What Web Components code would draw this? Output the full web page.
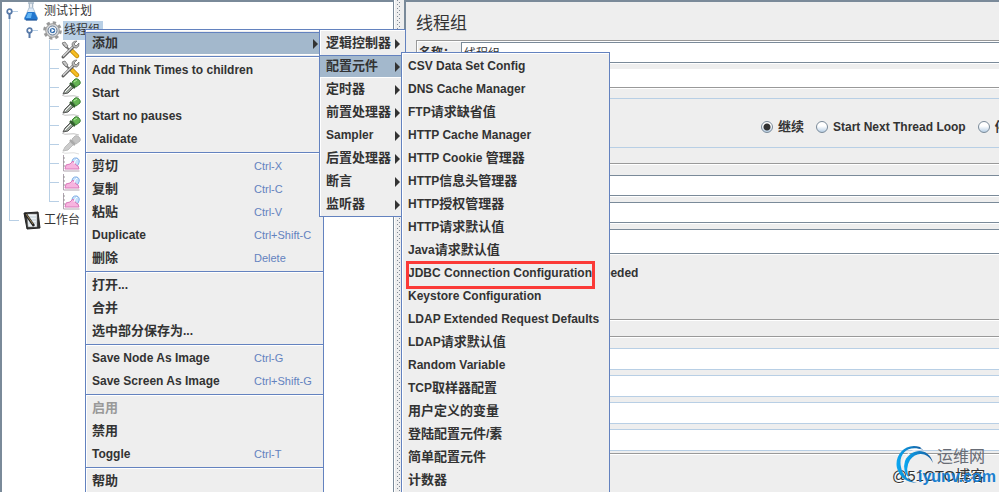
<!DOCTYPE html>
<html lang="zh-CN">
<head>
<meta charset="utf-8">
<title>测试计划</title>
<style>
    html, body {
        height: 100%;
        margin: 0;
        overflow: hidden;
    }
    body {
        --line: #7a8a99;
        --blue: #6382bf;
        --pale: #b8cfe5;
        --select: #a3b8cc;
        --panel: #eeeeee;
        background-color: var(--panel);
        color: #333333;
        font-family: "Liberation Sans", "Noto Sans CJK SC", sans-serif;
        font-size: 12px;
        line-height: 18px;
    }
</style>
</head>
<body>
<jmeter-app>
    <tree-pane slot="tree">
        <tree-row guide="root" icon="flask">测试计划</tree-row>
        <tree-row guide="branch" icon="gear" selected>线程组</tree-row>
        <tree-row guide="leaf" icon="tools"></tree-row>
        <tree-row guide="leaf" icon="tools"></tree-row>
        <tree-row guide="leaf" icon="dropper"></tree-row>
        <tree-row guide="leaf" icon="dropper"></tree-row>
        <tree-row guide="leaf" icon="dropper"></tree-row>
        <tree-row guide="leaf" icon="dropperOff"></tree-row>
        <tree-row guide="leaf" icon="graph"></tree-row>
        <tree-row guide="leaf" icon="graph"></tree-row>
        <tree-row guide="end" icon="graph"></tree-row>
        <tree-row guide="last" icon="notebook">工作台</tree-row>
    </tree-pane>
    <thread-form slot="form"></thread-form>
    <menu-popup slot="menus" class="context">
        <menu-item label="添加" submenu selected></menu-item>
        <menu-line></menu-line>
        <menu-item label="Add Think Times to children"></menu-item>
        <menu-item label="Start"></menu-item>
        <menu-item label="Start no pauses"></menu-item>
        <menu-item label="Validate"></menu-item>
        <menu-line></menu-line>
        <menu-item label="剪切" keys="Ctrl-X"></menu-item>
        <menu-item label="复制" keys="Ctrl-C"></menu-item>
        <menu-item label="粘贴" keys="Ctrl-V"></menu-item>
        <menu-item label="Duplicate" keys="Ctrl+Shift-C"></menu-item>
        <menu-item label="删除" keys="Delete"></menu-item>
        <menu-line></menu-line>
        <menu-item label="打开..."></menu-item>
        <menu-item label="合并"></menu-item>
        <menu-item label="选中部分保存为..."></menu-item>
        <menu-line></menu-line>
        <menu-item label="Save Node As Image" keys="Ctrl-G"></menu-item>
        <menu-item label="Save Screen As Image" keys="Ctrl+Shift-G"></menu-item>
        <menu-line></menu-line>
        <menu-item label="启用" disabled></menu-item>
        <menu-item label="禁用"></menu-item>
        <menu-item label="Toggle" keys="Ctrl-T"></menu-item>
        <menu-line></menu-line>
        <menu-item label="帮助"></menu-item>
    </menu-popup>
    <menu-popup slot="menus" class="add">
        <menu-item label="逻辑控制器" submenu></menu-item>
        <menu-item label="配置元件" submenu selected></menu-item>
        <menu-item label="定时器" submenu></menu-item>
        <menu-item label="前置处理器" submenu></menu-item>
        <menu-item label="Sampler" submenu></menu-item>
        <menu-item label="后置处理器" submenu></menu-item>
        <menu-item label="断言" submenu></menu-item>
        <menu-item label="监听器" submenu></menu-item>
    </menu-popup>
    <menu-popup slot="menus" class="config">
        <menu-item label="CSV Data Set Config"></menu-item>
        <menu-item label="DNS Cache Manager"></menu-item>
        <menu-item label="FTP请求缺省值"></menu-item>
        <menu-item label="HTTP Cache Manager"></menu-item>
        <menu-item label="HTTP Cookie 管理器"></menu-item>
        <menu-item label="HTTP信息头管理器"></menu-item>
        <menu-item label="HTTP授权管理器"></menu-item>
        <menu-item label="HTTP请求默认值"></menu-item>
        <menu-item label="Java请求默认值"></menu-item>
        <menu-item label="JDBC Connection Configuration" marked></menu-item>
        <menu-item label="Keystore Configuration"></menu-item>
        <menu-item label="LDAP Extended Request Defaults"></menu-item>
        <menu-item label="LDAP请求默认值"></menu-item>
        <menu-item label="Random Variable"></menu-item>
        <menu-item label="TCP取样器配置"></menu-item>
        <menu-item label="用户定义的变量"></menu-item>
        <menu-item label="登陆配置元件/素"></menu-item>
        <menu-item label="简单配置元件"></menu-item>
        <menu-item label="计数器"></menu-item>
    </menu-popup>
    <site-mark slot="mark"></site-mark>
</jmeter-app>

<script>
const icons = {
    flask: `
        <path d="M5 1h6M6.500 1v7M9.500 1v7" stroke="#a9b9c8" stroke-width="1.500" fill="none"/>
        <path d="M6 6L1.500 16q-.5 2 1.500 2h10q2 0 1.500-2L10 6z" fill="#dce9f6" stroke="#b4c6d8"/>
        <path d="M4.500 10h7l3 6q.5 2-1.500 2H3q-2 0-1.500-2z" fill="#2277cf"/>
        <path d="M5 11h4l-1 5H3z" fill="#62b4f4"/>
        <path d="M3 18h11" stroke="#174d93"/>`,
    gear: `
        <circle cx="9.500" cy="9.500" r="7.800" fill="none" stroke="#999999" stroke-width="3" stroke-dasharray="3.200 2.927"/>
        <circle cx="9.500" cy="9.500" r="6.800" fill="#d5d5d5" stroke="#999999"/>
        <circle cx="9.500" cy="9.500" r="4.500" fill="#e8eff8" stroke="#6c7f96"/>
        <circle cx="9.500" cy="9.500" r="2.600" fill="#316cae"/>
        <path d="M8.500 7.500l3 2-3 2z" fill="#ffffff"/>`,
    tools: `
        <path d="M2 4l11 10" stroke="#747474" stroke-width="2"/>
        <path d="M1 3l3-1 3 4-2 2z" fill="#c6c6c6" stroke="#666666" stroke-width=".7"/>
        <path d="M11 11l5 5" stroke="#bd8500" stroke-width="4.500" stroke-linecap="round"/>
        <path d="M11 11l5 5" stroke="#f5bd24" stroke-width="3" stroke-linecap="round"/>
        <path d="M2 17L13 6" stroke="#5b5b5b" stroke-width="3" stroke-linecap="round"/>
        <path d="M2 16.500L13 5.500" stroke="#d5d5d5" stroke-width="1.500"/>
        <path d="M16 1l-3 3 2 2 3-3q.5 4-2.500 5-4 .5-4.500-3 0-4 5-4z" fill="#b9b9b9" stroke="#636363" stroke-width=".7"/>`,
    dropper: `
        <path d="M1 17q2 2 7 1t10 1" fill="none" stroke="#c3c3c3"/>
        <path d="M2 16l2-4 7-7 3 3-7 7z" fill="#9ba49b" stroke="#555555"/>
        <path d="M4 14l7-7" stroke="#f5f5f5"/>
        <path d="M9 5l5 5" stroke="#315e2c" stroke-width="2.500"/>
        <path d="M11 4l3-3q2-1 4 1t1 4l-4 3z" fill="#65b453" stroke="#41843a"/>
        <path d="M13 4l3-2" stroke="#b4e8a2"/>`,
    dropperOff: `
        <path d="M1 17q2 2 7 1t10 1" fill="none" stroke="#dedede"/>
        <path d="M2 16l2-4 7-7 3 3-7 7z" fill="#cccccc" stroke="#bcbcbc"/>
        <path d="M9 5l5 5" stroke="#aaaaaa" stroke-width="2.500"/>
        <path d="M11 4l3-3q2-1 4 1t1 4l-4 3z" fill="#c5c5c5" stroke="#b8b8b8"/>`,
    graph: `
        <path d="M2.500 1v16h16" fill="none" stroke="#b0a4b0"/>
        <path d="M2 4h2M2 8h2M2 12h2" stroke="#999999"/>
        <path d="M11 11q-1-8 5-7 4 2 1 7-2 4-6 0z" fill="#c6e0fb" stroke="#80ade4"/>
        <path d="M4 15l1-4 4-1 3-3 3 4 2 1 1 3z" fill="#f7b4df" stroke="#d879ba"/>
        <path d="M13 10q1-4 3-5" stroke="#ffffff" fill="none"/>`,
    notebook: `
        <path d="M1 2l14-1 2 16-13 1z" fill="#333333" stroke="#222222"/>
        <path d="M4 3h10v13H5z" fill="#edf2f5" stroke="#777777" stroke-width=".5"/>
        <path d="M6 6h7M6 9h7M6 12h7" stroke="#bdcbd3"/>
        <path d="M2 2l9 13" stroke="#222222" stroke-width="2.500"/>
        <path d="M3 3l7 10" stroke="#9b8254"/>`
};

// x coordinates are relative to the inside of the tree border
const key = (x) => `
    <path d="M${x + 3} 9.500h6" stroke="#b8cfe5"/>
    <path d="M${x}.500 12v5" stroke="#5779a8" stroke-width="2"/>
    <circle cx="${x}.500" cy="9.500" r="2.300" fill="#ffffff" stroke="#5779a8" stroke-width="1.700"/>`;

const guides = {
    root: { width: 21, art: `<path d="M7.500 16v3" stroke="#b8cfe5"/>` + key(7) },
    branch: { width: 41, art: `<path d="M7.500 0v19" stroke="#b8cfe5"/>` + key(27) },
    leaf: { width: 59, art: `<path d="M7.500 0v19M47.500 0v19M48 9.500h9" stroke="#b8cfe5"/>` },
    end: { width: 59, art: `<path d="M7.500 0v19M47.500 0v10M48 9.500h9" stroke="#b8cfe5"/>` },
    last: { width: 21, art: `<path d="M7.500 0v10M8 9.500h9" stroke="#b8cfe5"/>` }
};

class JmeterApp extends HTMLElement {
    constructor() {
        super();
        this.shadowDOM = this.attachShadow({mode: "open"});
        this.shadowDOM.innerHTML = `
        <style>
        :host {
            display: flex;
            position: relative;
            height: 100vh;
            overflow: hidden;
        }
        .tree {
            flex: 0 0 394px;
            display: grid;
        }
        .splitter {
            flex: 0 0 10px;
            display: flex;
            justify-content: center;
            box-shadow: inset 1px 0 #ffffff;
        }
        .splitter::before {
            content: "";
            width: 4px;
            background:
                conic-gradient(from 270deg at 1px 1px, #808a96 90deg, transparent 0) 0 0 / 4px 4px,
                conic-gradient(from 270deg at 1px 1px, #808a96 90deg, transparent 0) 2px 2px / 4px 4px;
        }
        .form {
            flex: 1;
            min-width: 0;
            display: grid;
        }
        ::slotted(menu-popup) {
            position: absolute;
        }
        ::slotted(.context) {
            left: 85px;
            top: 29px;
            width: 239px;
        }
        ::slotted(.add) {
            left: 319px;
            top: 29px;
            width: 87px;
        }
        ::slotted(.config) {
            left: 401px;
            top: 52px;
            width: 209px;
        }
        ::slotted(site-mark) {
            position: absolute;
            right: 4px;
            bottom: 4px;
        }
        </style>
        <div class="tree"><slot name="tree"></slot></div>
        <div class="splitter"></div>
        <div class="form"><slot name="form"></slot></div>
        <slot name="menus"></slot>
        <slot name="mark"></slot>
        `;
    }
}

class TreePane extends HTMLElement {
    constructor() {
        super();
        this.shadowDOM = this.attachShadow({mode: "open"});
        this.shadowDOM.innerHTML = `
        <style>
        :host {
            display: block;
            border: solid var(--line);
            border-width: 2px 1px 0 2px;
            background-color: white;
        }
        </style>
        <slot></slot>
        `;
    }
}

class TreeRow extends HTMLElement {
    connectedCallback() {
        this.shadowDOM = this.attachShadow({mode: "open"});
        const guide = guides[this.getAttribute("guide")];
        this.shadowDOM.innerHTML = `
        <style>
        :host {
            display: flex;
            align-items: center;
            height: 19px;
            white-space: nowrap;
        }
        svg {
            flex: none;
            overflow: visible;
        }
        span {
            margin-left: 1px;
            padding: 0 3px 0 1px;
            font-size: 12px;
            line-height: 19px;
        }
        :host([selected]) span {
            background-color: var(--pale);
        }
        </style>
        <svg width="${guide.width}" height="19">${guide.art}</svg>
        <svg width="19" height="19" viewBox="0 0 19 19">${icons[this.getAttribute("icon")]}</svg>
        ${this.textContent ? "<span><slot></slot></span>" : ""}
        `;
    }
}

class MenuPopup extends HTMLElement {
    constructor() {
        super();
        this.shadowDOM = this.attachShadow({mode: "open"});
        this.shadowDOM.innerHTML = `
        <style>
        :host {
            display: block;
            box-sizing: border-box;
            padding-top: 2px;
            border: 1px solid var(--blue);
            background-color: var(--panel);
            box-shadow: inset 1px 1px #ffffff;
        }
        </style>
        <slot></slot>
        `;
    }
}

class MenuLine extends HTMLElement {
    constructor() {
        super();
        this.shadowDOM = this.attachShadow({mode: "open"});
        this.shadowDOM.innerHTML = `
        <style>
        :host {
            display: block;
            height: 1px;
            margin: 1px 0 2px;
            background-color: var(--blue);
            box-shadow: 0 1px #ffffff;
        }
        </style>
        `;
    }
}

class MenuItem extends HTMLElement {
    connectedCallback() {
        this.shadowDOM = this.attachShadow({mode: "open"});
        this.render();
    }

    // Chinese runs are set one pixel larger than the latin text
    get label() {
        return this.getAttribute("label").replace(/[\u4e00-\u9fff]+/g, (run) => `<span class="han">${run}</span>`);
    }

    render() {
        const keys = this.getAttribute("keys");
        this.shadowDOM.innerHTML = `
        <style>
        :host {
            display: block;
            position: relative;
        }
        button {
            display: flex;
            align-items: center;
            box-sizing: border-box;
            width: 100%;
            height: 23px;
            padding: 0 5px 0 6px;
            border: 0;
            background: none;
            color: inherit;
            font: bold 12px/20px "Liberation Sans", "Noto Sans CJK SC", sans-serif;
            text-align: left;
            white-space: nowrap;
        }
        .label {
            flex: 1;
            padding-bottom: 2px;
        }
        .han {
            font-size: 13px;
        }
        .keys {
            flex: 0 0 64px;
            padding-bottom: 2px;
            color: var(--blue);
            font-size: 11px;
            font-weight: normal;
        }
        .arrow {
            border: solid transparent;
            border-width: 5px 0 5px 5px;
            border-left-color: #333333;
        }
        :host([selected]) button {
            background-color: var(--select);
            box-shadow: inset 0 1px var(--blue), inset 0 -1px #ffffff;
        }
        :host([disabled]) button {
            color: #999999;
        }
        :host([marked])::after {
            content: "";
            position: absolute;
            inset: -1px 14px -4px 4px;
            border: 3px solid #fb3a37;
        }
        </style>
        <button type="button" ${this.hasAttribute("disabled") ? "disabled" : ""}>
            <span class="label">${this.label}</span>
            ${keys ? `<span class="keys">${keys}</span>` : ""}
            ${this.hasAttribute("submenu") ? `<span class="arrow"></span>` : ""}
        </button>
        `;
    }
}

class ThreadForm extends HTMLElement {
    constructor() {
        super();
        this.shadowDOM = this.attachShadow({mode: "open"});
        this.shadowDOM.innerHTML = `
        <style>
        * {
            box-sizing: border-box;
        }
        :host {
            display: block;
            min-width: 0;
            overflow: hidden;
            border: solid var(--line);
            border-width: 2px 0 0 2px;
            padding-left: 10px;
            font-weight: bold;
        }
        h1 {
            margin: 0;
            padding: 10px 0 4px;
            font-size: 17px;
            font-weight: normal;
            line-height: 24px;
        }
        section {
            margin-right: -12px;
            border: 1px solid #999999;
            box-shadow: 0 1px #ffffff, inset 1px 1px #ffffff;
        }
        .row {
            display: flex;
            align-items: center;
        }
        input, textarea {
            font: inherit;
            color: inherit;
        }
        .text {
            display: block;
            width: 100%;
            height: 21px;
            padding: 0 2px;
            border: 1px solid var(--line);
            border-radius: 0;
            background-color: white;
            box-shadow: 0 1px #ffffff;
            font-weight: normal;
            outline: 0;
            resize: none;
        }
        .name {
            padding: 1px 0 0 1px;
        }
        .name label {
            flex: 0 0 43px;
            padding-left: 1px;
        }
        .name textarea {
            height: 18px;
            margin-top: 6px;
            border: 0;
            box-shadow: none;
        }
        .action {
            height: 50px;
            margin-top: 10px;
            padding: 8px 0 0 344px;
            border-color: var(--pale);
            box-shadow: none;
            white-space: nowrap;
            gap: 12px;
        }
        .action label {
            display: flex;
            align-items: center;
            gap: 5px;
        }
        .han {
            font-size: 13px;
        }
        input[type=radio] {
            appearance: none;
            flex: none;
            width: 12px;
            height: 12px;
            margin: 0;
            border: 1px solid var(--line);
            border-radius: 50%;
            background: linear-gradient(#ffffff 40%, #b8cfe5);
        }
        input[type=radio]:checked {
            background: radial-gradient(circle, #333333 3px, transparent 4px), linear-gradient(#ffffff 40%, #b8cfe5);
        }
        input[type=checkbox] {
            width: 12px;
            height: 12px;
            margin: 0 4px 0 0;
        }
        .props {
            display: grid;
            gap: 6px;
            margin-top: 15px;
            padding: 11px 0 36px;
        }
        .props .loops {
            height: 25px;
        }
        .delay {
            padding: 4px 0 1px 6px;
        }
        .timer {
            display: grid;
            gap: 5px;
            margin-top: 16px;
            padding: 11px 0 2px;
        }
        .timer .text {
            height: 22px;
            border-color: var(--pale);
            box-shadow: none;
        }
        </style>
        <h1>线程组</h1>
        <section class="name">
            <div class="row">
                <label for="name">名称：</label>
                <input class="text" id="name" value="线程组">
            </div>
            <textarea class="text" aria-label="注释"></textarea>
        </section>
        <section class="action row">
            <label><input type="radio" name="action" checked><span class="han">继续</span></label>
            <label><input type="radio" name="action">Start Next Thread Loop</label>
            <label><input type="radio" name="action"><span class="han">停止线程</span></label>
        </section>
        <section class="props">
            <input class="text" aria-label="线程数">
            <input class="text" aria-label="Ramp-Up Period (in seconds)">
            <input class="text loops" aria-label="循环次数">
            <label class="delay row"><input type="checkbox">Delay Thread creation until needed</label>
        </section>
        <section class="timer">
            <input class="text" aria-label="启动时间">
            <input class="text" aria-label="结束时间">
            <input class="text" aria-label="持续时间">
            <input class="text" aria-label="启动延迟">
        </section>
        `;
    }
}

class SiteMark extends HTMLElement {
    constructor() {
        super();
        this.shadowDOM = this.attachShadow({mode: "open"});
        this.shadowDOM.innerHTML = `
        <style>
        :host {
            display: block;
            width: 104px;
            height: 44px;
            white-space: nowrap;
            line-height: 20px;
        }
        svg, span {
            position: absolute;
        }
        .blog {
            left: 1px;
            top: 22px;
            font-size: 15px;
            color: #333333;
            text-shadow: 1px 1px #ffffff;
        }
        .name {
            left: 46px;
            top: 3px;
            font-size: 16px;
            color: #686c75;
        }
        .site {
            left: 27px;
            top: 23px;
            font-size: 16px;
            font-weight: bold;
            color: #1b7fd0;
        }
        </style>
        <span class="blog">@51CTO博客</span>
        <svg width="46" height="44" viewBox="0 0 46 44">
            <defs>
                <linearGradient id="swirl">
                    <stop offset="0" stop-color="#0aa8f2"/>
                    <stop offset="1" stop-color="#175a9c"/>
                </linearGradient>
            </defs>
            <path d="M29 3C14-2 3 12 6 24q4 14 20 15Q12 35 10 23C7 10 17 0 32 6z" fill="url(#swirl)"/>
            <path d="M42 19C38 3 20 4 14 17q-3 10 4 17-4-10 1-18C25 7 37 8 42 19z" fill="url(#swirl)"/>
            <path d="M12 22Q12 6 31 5" fill="none" stroke="#ffffff" stroke-width=".8"/>
        </svg>
        <span class="name">运维网</span>
        <span class="site">iyunv.com</span>
        `;
    }
}

customElements.define("jmeter-app", JmeterApp);
customElements.define("tree-pane", TreePane);
customElements.define("tree-row", TreeRow);
customElements.define("menu-popup", MenuPopup);
customElements.define("menu-line", MenuLine);
customElements.define("menu-item", MenuItem);
customElements.define("thread-form", ThreadForm);
customElements.define("site-mark", SiteMark);
</script>
</body>
</html>
